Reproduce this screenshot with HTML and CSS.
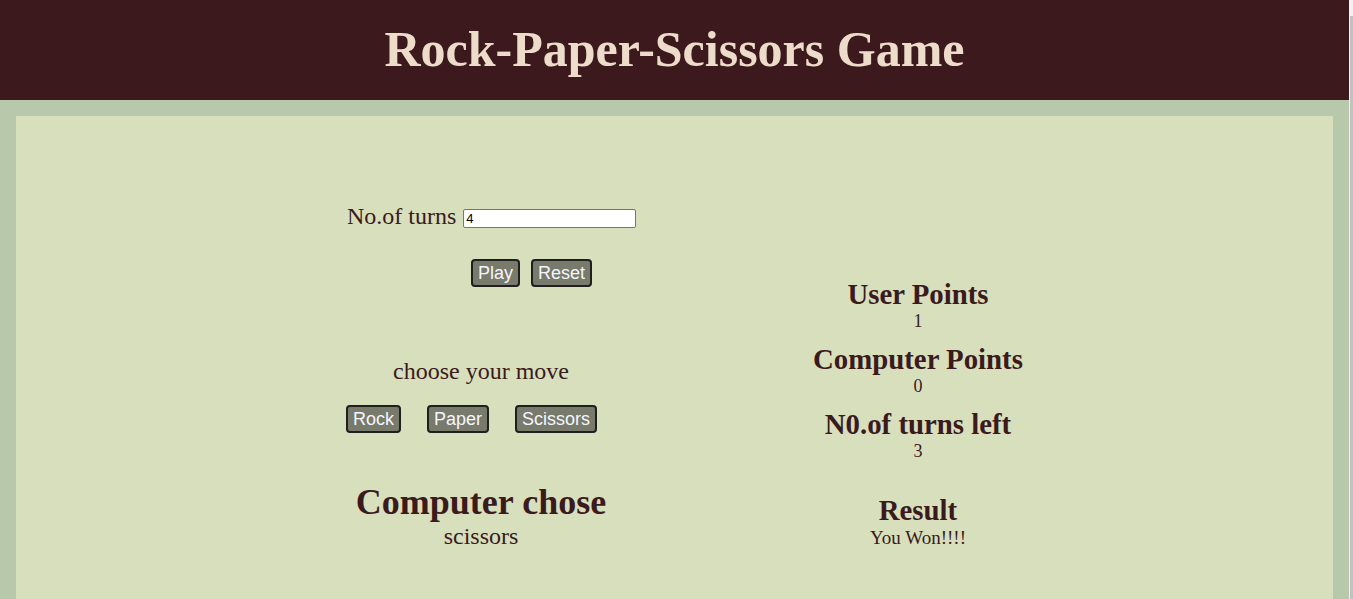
FILE: index.html
```html
<!DOCTYPE html>
<html lang="en">
<head>
<meta charset="utf-8">
<title>Rock-Paper-Scissors Game</title>
<link rel="stylesheet" href="styles.css">
</head>
<body>
<div class="page">
  <header class="header">
    <h1 class="title">Rock-Paper-Scissors Game</h1>
  </header>
  <main class="panel">
    <section class="left">
      <div class="turns-row">No.of turns <input class="turns-input" type="text" value="4"></div>
      <div class="ctrl-row">
        <button class="btn">Play</button><button class="btn btn-reset">Reset</button>
      </div>
      <div class="choose">choose your move</div>
      <div class="move-row">
        <button class="btn">Rock</button><button class="btn btn-move">Paper</button><button class="btn btn-move">Scissors</button>
      </div>
      <h2 class="chose-title">Computer chose</h2>
      <div class="chose-value">scissors</div>
    </section>
    <section class="right">
      <h3 class="stat-title first">User Points</h3>
      <div class="stat-value">1</div>
      <h3 class="stat-title">Computer Points</h3>
      <div class="stat-value">0</div>
      <h3 class="stat-title">N0.of turns left</h3>
      <div class="stat-value">3</div>
      <h3 class="stat-title result">Result</h3>
      <div class="result-value">You Won!!!!</div>
    </section>
  </main>
</div>
<div class="scroll-thumb"></div>
</body>
</html>
```
FILE: styles.css
```css
html, body {
  margin: 0;
  padding: 0;
  height: 100%;
  overflow: hidden;
}
html {
  background: #f1f1f1;
}
body {
  margin-right: 4px;
  font-family: "Liberation Serif", "Times New Roman", serif;
  color: #3a1a1c;
}
.page {
  height: 100%;
  background: #b8c8ab;
  display: flex;
  flex-direction: column;
}
.header {
  height: 100px;
  flex: none;
  background: #3b191c;
}
.title {
  margin: 0;
  text-align: center;
  font-size: 50px;
  line-height: 98px;
  font-weight: bold;
  color: #eedccb;
}
.panel {
  flex: 1;
  margin: 16px 16px 0;
  background: #d8dfbd;
  display: flex;
  align-items: flex-start;
}
.left {
  width: 270px;
  margin-left: 330px;
  padding-top: 86px;
}
.turns-row {
  font-size: 24px;
  line-height: 28px;
  padding-left: 1px;
  white-space: nowrap;
}
.turns-input {
  box-sizing: border-box;
  width: 173px;
  height: 19px;
  margin: 0 0 0 1px;
  padding: 0 2px;
  border: 1px solid #767676;
  border-radius: 2px;
  background: #fff;
  font-family: "Liberation Sans", Arial, sans-serif;
  font-size: 13px;
  color: #000;
  vertical-align: middle;
}
.ctrl-row {
  display: flex;
  margin-top: 29px;
  padding-left: 125px;
}
.btn {
  box-sizing: border-box;
  height: 28px;
  margin: 0;
  padding: 0 5px;
  border: 2px solid #1f1f1f;
  border-radius: 4px;
  background: #787a6b;
  color: #f4f6ff;
  font-family: "Liberation Sans", Arial, sans-serif;
  font-size: 18px;
  line-height: 24px;
}
.btn-reset {
  margin-left: 11px;
}
.choose {
  margin-top: 70px;
  font-size: 24px;
  line-height: 28px;
  text-align: center;
}
.move-row {
  display: flex;
  margin-top: 20px;
}
.btn-move {
  margin-left: 26px;
}
.chose-title {
  margin: 49px 0 0;
  font-size: 36px;
  line-height: 40px;
  font-weight: bold;
  text-align: center;
}
.chose-value {
  font-size: 24px;
  line-height: 28px;
  text-align: center;
}
.right {
  width: 300px;
  margin-left: 152px;
  padding-top: 163px;
  text-align: center;
}
.stat-title {
  margin: 13px 0 0;
  font-size: 28.8px;
  line-height: 30px;
  font-weight: bold;
}
.stat-title.first {
  margin-top: 0;
}
.stat-title.result {
  margin-top: 34px;
}
.stat-value {
  font-size: 18px;
  line-height: 22px;
  padding-top: 1px;
  margin-bottom: -1px;
}
.result-value {
  margin-top: 2px;
  font-size: 19px;
  line-height: 22px;
}
.scroll-thumb {
  position: fixed;
  right: 0;
  top: 16px;
  bottom: 0;
  width: 3px;
  background: #c1c1c1;
}
```
